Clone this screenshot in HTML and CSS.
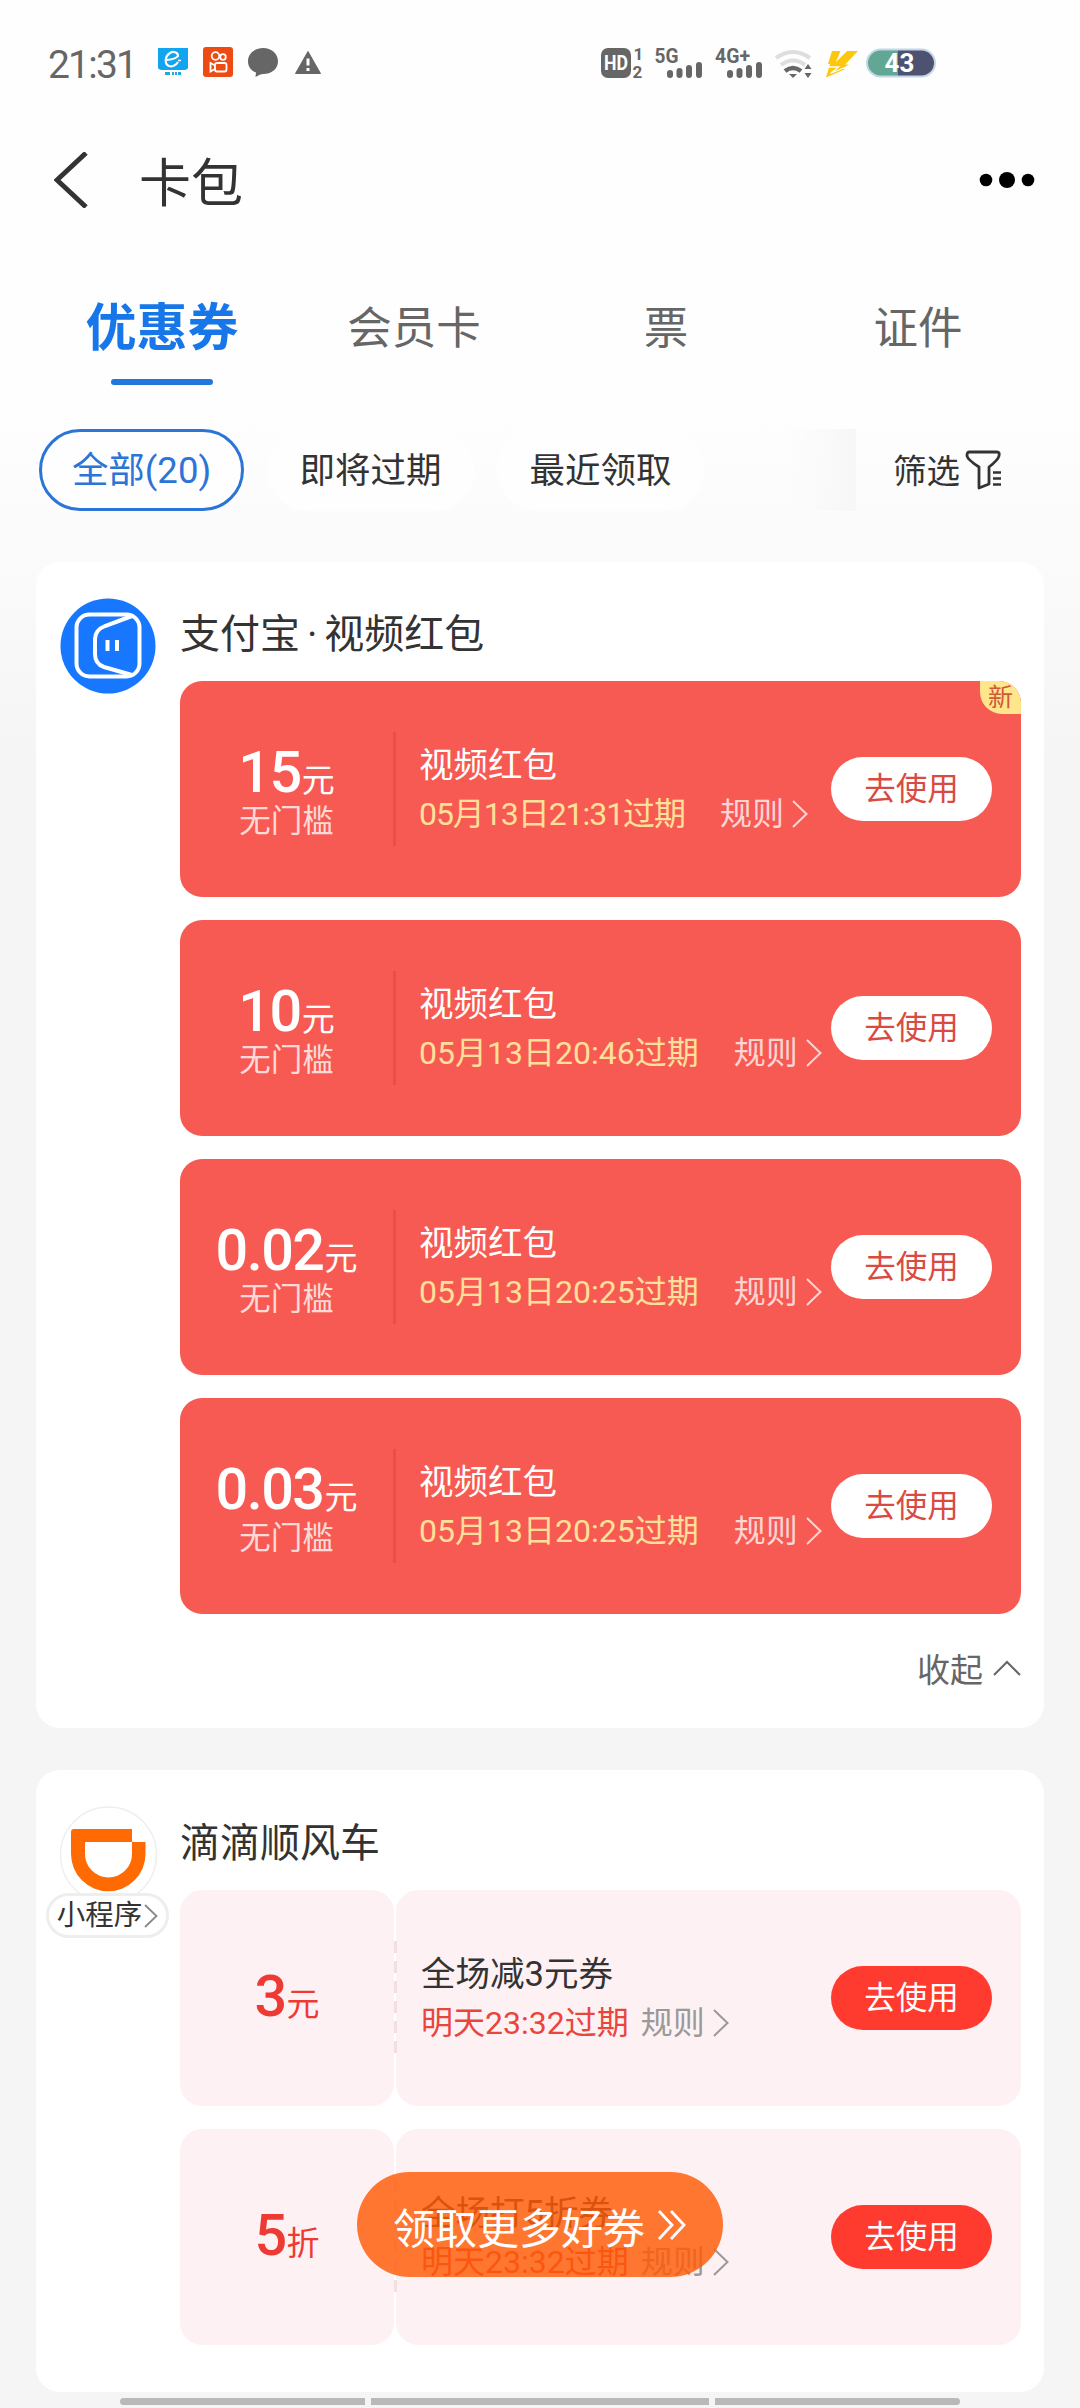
FILE: index.html
```html
<!DOCTYPE html>
<html lang="zh-CN">
<head>
<meta charset="utf-8">
<title>卡包</title>
<link rel="stylesheet" href="styles.css">
</head>
<body>
<svg width="0" height="0" class="defs">
  <defs>
    <symbol id="chev" viewBox="0 0 16 28"><path d="M1 1 14.5 14 1 27" fill="none" stroke="currentColor" stroke-width="2"/></symbol>
  </defs>
</svg>
<header class="status">
  <span class="clock">21:31</span>
  <svg class="status-left" width="166" height="32" viewBox="157 46 166 32">
    <path d="M158 48h30v20q-1 2-5 2h-20q-4 0-5-2z" fill="#12a5ef"/>
    <path d="M167 60q9-1 11-4c0-4-5-5-8-3-5 3-6 11-1 13 4 1 7-1 9-4" fill="none" stroke="#fff" stroke-width="2.2"/>
    <path d="M178 60.500h3" stroke="#fff" stroke-width="1.500"/>
    <path d="M165 73.500h5m2 0h2m1 0h2m1 0h3" stroke="#27a4d8" stroke-width="3"/>
    <rect x="203" y="47" width="30" height="30" rx="3" fill="#ee4b12"/>
    <g fill="none" stroke="#fff" stroke-width="1.800"><circle cx="215.500" cy="56" r="3.800"/><circle cx="223" cy="57" r="2.800"/><rect x="215" y="63" width="11.500" height="8.500" rx="2"/><path d="M215 65.500 210.500 63v8.500l4.500-2.500"/></g>
    <path d="M263 48c8.500 0 15 5.500 15 13.200S271.500 74 263 74c-2 0-4 1-7.500 3l.5-4.500c-5-2-8-6-8-11.300C248 53.500 254.500 48 263 48z" fill="#666"/>
    <path d="M308 51.500 320.500 73.500h-25z" fill="#666" stroke="#666" stroke-linejoin="round"/><path d="M308 58.500v7m0 2.500v3" stroke="#fff" stroke-width="3"/>
  </svg>
  <svg class="status-right" width="336" height="42" viewBox="602 41 336 42">
    <rect x="602" y="48" width="30" height="30" rx="7" fill="#666"/>
    <text x="617" y="70" text-anchor="middle" textLength="24" lengthAdjust="spacingAndGlyphs" class="hd">HD</text>
    <g class="mini"><text x="634.500" y="60" font-size="17">1</text><text x="633.500" y="78" font-size="17" textLength="11">2</text>
    <text x="655.500" y="63" textLength="24" lengthAdjust="spacingAndGlyphs" font-size="21">5G</text><text x="716" y="63" textLength="35" lengthAdjust="spacingAndGlyphs" font-size="21">4G+</text></g>
    <g stroke="#666" stroke-width="6" stroke-linecap="round"><path d="M671 73v2m9.500-4v4m9.500-7v7m10-10v10"/><path d="M731 73v2m9.500-4v4m9.500-7v7m10-10v10"/></g>
    <g fill="none" stroke-width="4"><path d="M777 58q17-12 34 0" stroke="#dedede"/><path d="M782 65q12-9 24 0" stroke="#dedede"/><path d="M786 71q8-6 16 0" stroke="#666" stroke-width="4.500"/></g>
    <path d="M790 74h8l-4 4zM809 64l3.500 5h-7zm0 14 3.500-5h-7z" fill="#666"/>
    <path d="M833 51h8.500l-4.500 11 11-11h11l-13 13.500h4l-8 4.500h4.500L827 77.500l4-13.500h-2z" fill="#fcc70d"/><path d="M828.500 67h11l-8 6.500 13-5.500" stroke="#fff" fill="none" stroke-width="1.300"/>
    <rect x="868" y="49.500" width="68" height="27" rx="13.500" fill="#4c5270"/><path d="M881.500 49.500H899v27h-17.500a13.500 13.500 0 0 1 0-27z" fill="#62a793"/>
    <rect x="868" y="49.500" width="68" height="27" rx="13.500" fill="none" stroke="#c3d6ea" stroke-width="2"/>
    <text x="900.500" y="72" text-anchor="middle" class="battery">43</text>
  </svg>
</header>

<nav class="titlebar">
  <svg width="34" height="56" viewBox="0 0 34 56"><path d="M32 1 3 28l29 27" fill="none" stroke="#333" stroke-width="5"/></svg>
  <h1>卡包</h1>
  <svg class="more" width="56" height="18" viewBox="0 0 56 18"><circle cx="7" cy="9" r="6.300"/><circle cx="28" cy="9" r="8"/><circle cx="49" cy="9" r="6.300"/></svg>
</nav>

<div class="tabs">
  <div class="tab active">优惠券</div><div class="tab">会员卡</div><div class="tab">票</div><div class="tab">证件</div>
</div>

<div class="filters">
  <div class="chip on">全部(20)</div>
  <div class="chip">即将过期</div>
  <div class="chip">最近领取</div>
  <div class="fade"></div>
  <div class="filter"><span>筛选</span>
    <svg width="37" height="42" viewBox="0 0 37 42"><path d="M4 2h28q3 0 2 4-1 4-10 11v17l-10 4V17Q3 10 2 6q0-4 2-4z" fill="none" stroke="#333" stroke-width="2.800" stroke-linejoin="round"/><path d="M28 22.500h8m-8 6h8m-8 6h8" stroke="#333" stroke-width="2.600"/></svg>
  </div>
</div>

<main>
  <section class="card first">
    <div class="brand">
      <svg width="96" height="96" viewBox="0 0 96 96"><circle cx="48" cy="48" r="47.500" fill="#1777ff"/><g fill="none" stroke="#fff" stroke-width="4"><rect x="16.500" y="16.500" width="63" height="62" rx="13"/><path d="M72 18 45 28q-10 4-10 13v15q0 10 9 13l28 8"/></g><path d="M47.500 42v11m9.500-11v11" stroke="#fff" stroke-width="4"/></svg>
    </div>
    <div class="body">
      <h2>支付宝 · 视频红包</h2>
      <div class="list">
        <article class="coupon">
          <div class="left"><p class="amt"><b>15</b>元</p><p class="sub">无门槛</p></div>
          <div class="info"><h3>视频红包</h3><p class="line"><span class="date tight">05月13日21:31过期</span><span class="rule">规则<svg width="16" height="28"><use href="#chev"/></svg></span></p></div>
          <a class="use">去使用</a><span class="new">新</span>
        </article>
        <article class="coupon">
          <div class="left"><p class="amt"><b>10</b>元</p><p class="sub">无门槛</p></div>
          <div class="info"><h3>视频红包</h3><p class="line"><span class="date">05月13日20:46过期</span><span class="rule">规则<svg width="16" height="28"><use href="#chev"/></svg></span></p></div>
          <a class="use">去使用</a>
        </article>
        <article class="coupon">
          <div class="left"><p class="amt"><b>0.02</b>元</p><p class="sub">无门槛</p></div>
          <div class="info"><h3>视频红包</h3><p class="line"><span class="date">05月13日20:25过期</span><span class="rule">规则<svg width="16" height="28"><use href="#chev"/></svg></span></p></div>
          <a class="use">去使用</a>
        </article>
        <article class="coupon">
          <div class="left"><p class="amt"><b>0.03</b>元</p><p class="sub">无门槛</p></div>
          <div class="info"><h3>视频红包</h3><p class="line"><span class="date">05月13日20:25过期</span><span class="rule">规则<svg width="16" height="28"><use href="#chev"/></svg></span></p></div>
          <a class="use">去使用</a>
        </article>
      </div>
      <div class="fold">收起<svg width="28" height="16" viewBox="0 0 28 16"><path d="M1 15 14 2l13 13" fill="none" stroke="#666" stroke-width="2"/></svg></div>
    </div>
  </section>

  <section class="card second">
    <div class="brand">
      <svg width="98" height="98" viewBox="0 0 98 98"><circle cx="48.500" cy="49" r="48" fill="#fff" stroke="#eee" stroke-width="1.500"/><path d="M14 23h58v13h13.500v12a37 37 0 0 1-74.500 0V26q0-3 3-3zM25 36v12a23.300 23.300 0 0 0 47 0V36z" fill="#ff6a03" fill-rule="evenodd"/></svg>
      <span class="mini-app">小程序<svg width="14" height="24" viewBox="0 0 14 24"><path d="M1 1 12.500 12 1 23" fill="none" stroke="#888" stroke-width="1.800"/></svg></span>
    </div>
    <div class="body">
      <h2>滴滴顺风车</h2>
      <div class="list">
        <article class="coupon pink">
          <div class="left"><p class="amt"><b>3</b>元</p></div>
          <div class="info"><h3>全场减3元券</h3><p class="line"><span class="date">明天23:32过期</span><span class="rule">规则<svg width="16" height="28"><use href="#chev"/></svg></span></p></div>
          <a class="use">去使用</a>
        </article>
        <article class="coupon pink">
          <div class="left"><p class="amt"><b>5</b>折</p></div>
          <div class="info"><h3>全场打5折券</h3><p class="line"><span class="date">明天23:32过期</span><span class="rule">规则<svg width="16" height="28"><use href="#chev"/></svg></span></p></div>
          <a class="use">去使用</a>
        </article>
      </div>
    </div>
  </section>
</main>

<a class="float"><span>领取更多好券</span><svg width="30" height="32" viewBox="0 0 30 32"><path d="M2 2 15 16 2 30M14 2l13 14-13 14" fill="none" stroke="#fff" stroke-width="2.800"/></svg></a>
<footer class="gesture"><i></i><i></i><i></i></footer>
</body>
</html>
```
FILE: styles.css
```css
* { box-sizing: border-box; margin: 0; padding: 0; }
body {
  width: 1080px; height: 2408px; overflow: hidden; position: relative;
  display: flex; flex-direction: column;
  font-family: Roboto, "Noto Sans CJK SC", sans-serif; color: #333;
  background: linear-gradient(#fefefe 0, #fefefe 410px, #fbfbfb 540px, #f5f5f5 760px);
}
h1, h2, h3 { font-weight: 400; white-space: nowrap; }
.defs { position: absolute; }
svg { display: block; flex: none; }

.status { height: 130px; padding: 41px 143px 0 48px; display: flex; align-items: flex-start; }
.clock { width: 109px; padding-top: 5px; font-size: 39px; line-height: 38px; letter-spacing: -1.8px; color: #666; white-space: nowrap; }
.status-left { margin-top: 5px; }
.status-right { margin-left: auto; }
.hd { font: 700 20px Roboto, sans-serif; fill: #fff; }
.mini { font-family: Roboto, sans-serif; font-weight: 700; fill: #666; }
.battery { font: 700 26px Roboto, sans-serif; fill: #fff; }

.titlebar { height: 100px; padding: 0 45px 0 54px; display: flex; align-items: center; }
.titlebar h1 { margin-left: 51px; padding-top: 10px; font-size: 52px; line-height: 60px; }
.more { margin-left: auto; fill: #000; }

.tabs { height: 199px; padding: 69px 36px 0; display: grid; grid-template-columns: repeat(4, 1fr); }
.tab { text-align: center; font-size: 44.500px; line-height: 60px; color: #666; }
.tab.active { font-size: 51px; font-weight: 700; color: #1777e8; }
.tab.active::after { content: ""; display: block; width: 102px; height: 6px; margin: 20px auto 0; border-radius: 3px; background: #2276dc; }

.filters { height: 133px; padding-left: 39px; display: flex; }
.chip { width: 207px; height: 82px; margin-right: 23px; border-radius: 41px; background: #fefefe; font-size: 35.500px; line-height: 84px; text-align: center; white-space: nowrap; }
.chip.on { width: 205px; border: 3px solid #2c74d6; font-size: 36.500px; line-height: 78px; color: #2c74d6; }
.fade { width: 68px; height: 82px; margin-left: 61px; background: linear-gradient(90deg, #f7f7f700, #f7f7f7); }
.filter { height: 82px; margin-left: 37px; display: flex; align-items: center; gap: 5px; font-size: 33.500px; }
.filter span { padding-bottom: 4px; }
.filter svg { margin-top: 1px; }

main { padding: 0 36px; display: flex; flex-direction: column; gap: 42px; }
.card { border-radius: 24px; background: #fff; padding: 36px 23px 0 24px; display: flex; }
.first { height: 1166px; }
.second { height: 622px; }
.brand { width: 120px; flex: none; display: flex; flex-direction: column; align-items: flex-start; }
.body { width: 841px; }
h2 { height: 83px; padding-top: 7px; font-size: 40px; line-height: 60px; word-spacing: -3px; }
.second h2 { height: 84px; padding-top: 8px; }
.list { display: flex; flex-direction: column; gap: 23px; }
.coupon { position: relative; height: 216px; border-radius: 22px; background: #f75a52; color: #fff; display: flex; align-items: center; }
.left { width: 213px; text-align: center; white-space: nowrap; }
.amt { padding-top: 6px; font-size: 33px; line-height: 56px; }
.amt b { margin-right: 1px; font-weight: 500; font-size: 57.500px; letter-spacing: -1.500px; }
.sub { font-size: 31.500px; line-height: 36px; margin-top: -5px; color: rgba(255,255,255,.78); }
.info { width: 438px; height: 114px; padding: 7px 0 0 23px; border-left: 3px solid #e94e47; white-space: nowrap; }
h3 { font-size: 34.500px; line-height: 52px; }
.line { display: flex; align-items: center; font-size: 32px; line-height: 46px; }
.date { color: #ffe09a; letter-spacing: 0; }
.date.tight { letter-spacing: -1.050px; }
.rule { margin-left: 35px; display: flex; align-items: center; gap: 8px; color: rgba(255,255,255,.75); }
.use { width: 161px; height: 64px; border-radius: 32px; background: #fff; color: #d94b41; font-size: 31.500px; line-height: 65px; text-align: center; }
.new { position: absolute; top: 0; right: 0; width: 41px; height: 33px; border-radius: 0 22px 0 22px; background: #ffe68c; color: #cf5a35; font-size: 25px; line-height: 33px; text-align: center; }
.fold { height: 108px; display: flex; justify-content: flex-end; align-items: center; gap: 10px; font-size: 33px; color: #666; }

.pink { background: none; color: #ee3a35; gap: 2px; }
.pink .left { width: 214px; height: 216px; border-radius: 22px; background: #fef1f3; display: flex; align-items: center; justify-content: center; }
.pink .info { position: relative; flex: 1; height: 216px; padding: 58px 0 0 25px; border: 0; border-radius: 22px; background: #fef1f3; }
.pink .info::before { content: ""; position: absolute; left: -2px; top: 51px; width: 3px; height: 115px; background: repeating-linear-gradient(#f3dfe2 0 12px, transparent 12px 20px); }
.pink h3 { color: #333; }
.pink .date { color: #e8463c; }
.pink .rule { margin-left: 12px; color: #999; }
.pink .use { position: absolute; right: 29px; top: 76px; background: #ff3a2f; color: #fff; }
.mini-app { position: relative; width: 123px; height: 45px; margin: -11px 0 0 -14px; border: 3px solid #eee; border-radius: 23px; background: #fff; display: flex; align-items: center; justify-content: center; gap: 2px; font-size: 28.500px; line-height: 38px; white-space: nowrap; }

.float { position: absolute; left: 357px; top: 2172px; width: 366px; height: 105px; padding-left: 36px; border-radius: 53px; background: rgba(255,90,6,.82); color: #fff; display: flex; align-items: center; gap: 12px; font-size: 42px; white-space: nowrap; }
.float span { padding-top: 1px; }
.gesture { position: absolute; left: 120px; top: 2398px; width: 840px; height: 7px; display: grid; grid-template-columns: 245px 338px 245px; gap: 6px; }
.gesture i { background: #b9b9b9; }
.gesture i:first-child { border-radius: 4px 0 0 4px; }
.gesture i:last-child { border-radius: 0 4px 4px 0; }
```
